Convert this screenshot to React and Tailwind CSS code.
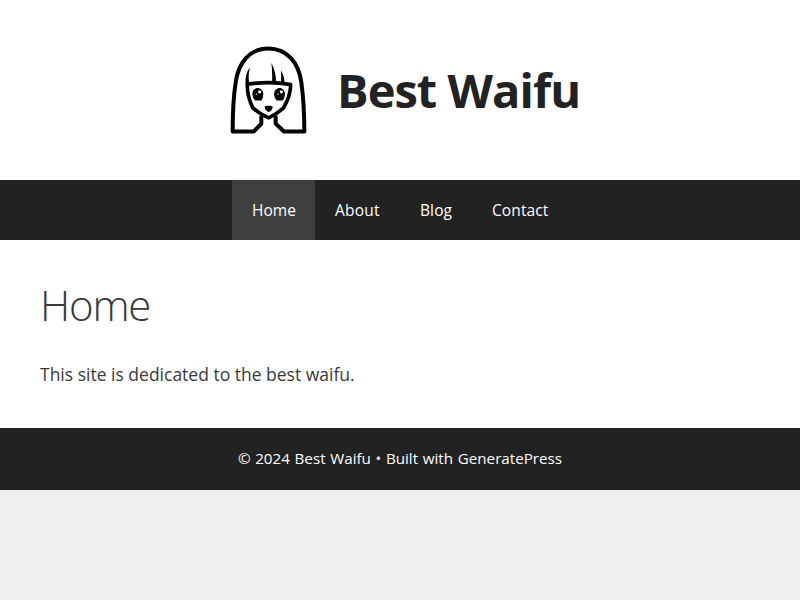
import clsx from 'clsx'

const links = [
  { label: 'Home', box: 'w-[83px]', text: 'tracking-[0.05px]', active: true },
  { label: 'About', box: 'w-[85px]', text: 'tracking-[0.2px]' },
  { label: 'Blog', box: 'w-[72px]', text: 'tracking-[0.1px]' },
  { label: 'Contact', box: 'w-[96px]', text: 'tracking-[0.1px]' }
]

function Logo() {
  return (
    <svg viewBox="27 13.5 240 273" className="h-[91px] w-[80px] shrink-0" fill="none">
      {/* hair and shoulders */}
      <path
        d="M124 226V250L101 273H38C38 225 39 176 47 126C55 65 91 24 145 24C200 24 236 65 244 126C251 176 253 225 253 273H192L167 250V226"
        stroke="#000"
        strokeWidth="12"
        strokeLinejoin="round"
      />
      {/* face */}
      <path
        d="M82 131Q148 121 212 132Q212 166 190 203Q169 222 146 232Q121 222 99 203Q81 168 82 131Z"
        stroke="#000"
        strokeWidth="11"
        strokeLinejoin="round"
      />
      {/* fringe */}
      <path d="M90 81Q74 99 77 132L88 130Q83 104 90 81ZM154 67Q158 97 156 126L168 127Q169 96 154 67ZM183 89Q184 107 183 127L194 129Q194 110 183 89Z" fill="#000" />
      {/* eyes */}
      <path d="M97 161C98 136 129 136 130 161Q130 172 124 180H106Q98 174 97 161ZM162 161C164 136 194 136 195 161Q194 174 188 180H170Q163 173 162 161Z" fill="#000" />
      <circle cx="119" cy="154" r="5" fill="#fff" />
      <circle cx="109" cy="161" r="2" fill="#fff" />
      <circle cx="184" cy="154" r="5" fill="#fff" />
      <circle cx="174" cy="161" r="2" fill="#fff" />
      {/* mouth */}
      <path d="M134 199Q136 195 146 196Q156 195 158 199Q158 210 146 215Q134 210 134 199Z" fill="#000" />
    </svg>
  )
}

export default function App() {
  return (
    <div className="h-[600px] w-[800px] overflow-hidden bg-[#efefef] font-['Open_Sans','Noto_Sans',sans-serif] text-[#3a3a3a]">
      <header className="flex h-[180px] items-center bg-white pl-[229px]">
        <Logo />
        <h1 className="ml-[28px] whitespace-nowrap text-[47px] leading-[62px] font-bold tracking-[-0.95px] text-[#222]">
          Best Waifu
        </h1>
      </header>

      <nav className="flex h-[60px] bg-[#222] pl-[232px] text-[15.5px] leading-[60px] text-white">
        {links.map((link) => (
          <a
            key={link.label}
            href="#"
            className={clsx('h-full pl-[20px] whitespace-nowrap', link.box, link.text, link.active && 'bg-[#3f3f3f]')}
          >
            {link.label}
          </a>
        ))}
      </nav>

      <main className="h-[188px] bg-white px-[40px] pt-[40px]">
        <h2 className="text-[42px] leading-[50px] font-light tracking-[-1.2px]">Home</h2>
        <p className="mt-[31px] text-[17.5px] leading-[26px]">This site is dedicated to the best waifu.</p>
      </main>

      <footer className="flex h-[62px] items-center justify-center bg-[#222] pb-[2px] text-[15.2px] text-white">
        <p className="whitespace-nowrap [word-spacing:0.7px]">© 2024 Best Waifu • Built with GeneratePress</p>
      </footer>
    </div>
  )
}
